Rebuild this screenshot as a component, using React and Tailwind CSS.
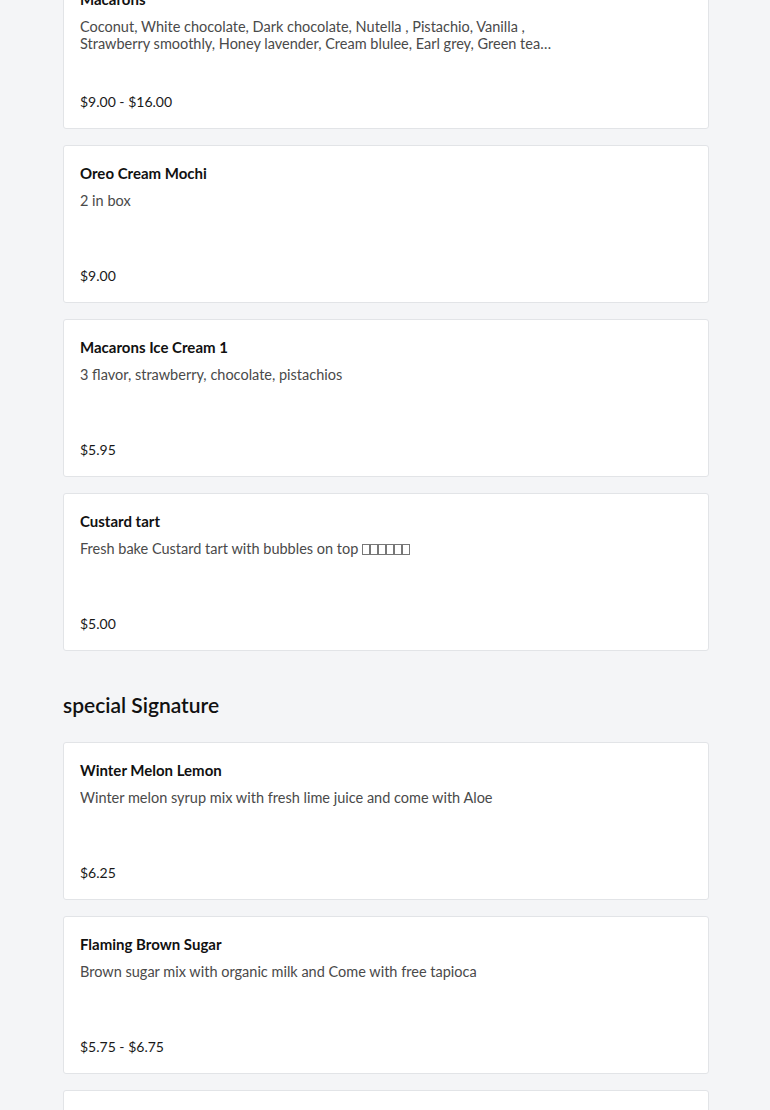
import React from 'react';

const sections = [
  {
    title: null,
    items: [
      { name: 'Macarons', desc: 'Coconut, White chocolate, Dark chocolate, Nutella , Pistachio, Vanilla , Strawberry smoothly, Honey lavender, Cream blulee, Earl grey, Green tea, Rose, Lemon, Salted caramel', price: '$9.00 - $16.00' },
      { name: 'Oreo Cream Mochi', desc: '2 in box', price: '$9.00' },
      { name: 'Macarons Ice Cream 1', desc: '3 flavor, strawberry, chocolate, pistachios', price: '$5.95' },
      { name: 'Custard tart', desc: 'Fresh bake Custard tart with bubbles on top', tofu: 6, price: '$5.00' },
    ],
  },
  {
    title: 'special Signature',
    items: [
      { name: 'Winter Melon Lemon', desc: 'Winter melon syrup mix with fresh lime juice and come with Aloe', price: '$6.25' },
      { name: 'Flaming Brown Sugar', desc: 'Brown sugar mix with organic milk and Come with free tapioca', price: '$5.75 - $6.75' },
      { name: 'Jasmine Milk Tea', desc: 'Jasmine green tea with fresh milk', price: '$5.50' },
    ],
  },
];

function Tofu({ count }) {
  return (
    <span className="inline-flex align-[-1px] ml-[4px]">
      {Array.from({ length: count }).map((_, i) => (
        <span key={i} className="inline-block w-[8px] h-[11px] border border-[#777] bg-white" />
      ))}
    </span>
  );
}

function ItemCard({ item }) {
  return (
    <div className="bg-white border border-[#e2e4e7] rounded-[3px] h-[158px] pt-[17px] px-4 pb-4 flex flex-col">
      <div className="text-[15px] leading-5 font-bold text-[#111]">{item.name}</div>
      <div className="mt-[9px] h-[34px] max-w-[472px] text-[14.5px] leading-[17px] text-[#4a4a4a] line-clamp-2">
        {item.desc}
        {item.tofu ? <Tofu count={item.tofu} /> : null}
      </div>
      <div className="mt-auto text-[14px] leading-5 text-[#191919]">{item.price}</div>
    </div>
  );
}

export default function App() {
  return (
    <div className="min-h-screen bg-[#f4f5f7] overflow-hidden" style={{ fontFamily: 'Lato, "Open Sans", sans-serif' }}>
      <div className="ml-[63px] mr-[61px] -mt-[29px] pb-10">
        {sections.map((s, si) => (
          <div key={si} className={si ? 'mt-10' : ''}>
            {s.title && (
              <h2 className="text-[21px] leading-7 font-semibold text-[#111] mb-[23px]">{s.title}</h2>
            )}
            <div className="flex flex-col gap-4">
              {s.items.map((it) => <ItemCard key={it.name} item={it} />)}
            </div>
          </div>
        ))}
      </div>
    </div>
  );
}
